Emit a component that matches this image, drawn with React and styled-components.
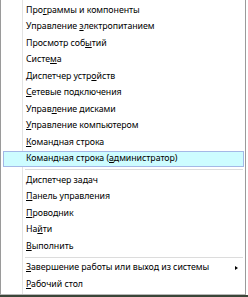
import styled, { createGlobalStyle } from "styled-components";

const GlobalStyle = createGlobalStyle`
  html, body {
    margin: 0;
    padding: 0;
    background: #ffffff;
  }
  body {
    width: 248px;
    height: 297px;
    overflow: hidden;
    font-family: "Noto Sans", "Open Sans", "DejaVu Sans", sans-serif;
  }
`;

const Screen = styled.div`
  width: 248px;
  height: 297px;
  display: flex;
  flex-direction: column;
`;

const Menu = styled.div`
  width: 246px;
  height: 295px;
  box-sizing: border-box;
  border-left: 1px solid #9a9a9a;
  border-right: 1px solid #9a9a9a;
  border-bottom: 1px solid #b8b8b8;
  padding: 2px 1px 0 2px;
  background:
    linear-gradient(
      to right,
      transparent 21px,
      #e3e3e3 21px,
      #e3e3e3 22px,
      #ffffff 22px,
      #ffffff 23px,
      transparent 23px
    ),
    #ffffff;
  display: flex;
  flex-direction: column;
`;

const Desktop = styled.div`
  flex: 1;
  background: #3a4638;
`;

const Row = styled.div`
  height: 16.5px;
  box-sizing: border-box;
  display: flex;
  align-items: center;
  justify-content: space-between;
  padding: 0 5px 0 22px;
  border: 1px solid ${(p) => (p.$active ? "#a4b8e6" : "transparent")};
  background: ${(p) => (p.$active ? "#cdfcff" : "transparent")};
  font-size: 8.8px;
  letter-spacing: -0.05px;
  line-height: 1;
  color: #000000;
  white-space: nowrap;
  cursor: default;
`;

const Key = styled.span`
  text-decoration: underline;
  text-underline-offset: 1px;
  text-decoration-thickness: 1px;
`;

const Arrow = styled.span`
  width: 0;
  height: 0;
  border-top: 2.5px solid transparent;
  border-bottom: 2.5px solid transparent;
  border-left: 3px solid #000000;
`;

const Separator = styled.div`
  height: 5px;
  display: flex;
  align-items: center;
  padding-left: 22px;
  margin-right: 1px;
  &::after {
    content: "";
    flex: 1;
    height: 1px;
    background: #dcdcdc;
  }
`;

const groups = [
  [
    { label: "Про&граммы и компоненты" },
    { label: "Управление &электропитанием" },
    { label: "Просмотр соб&ытий" },
    { label: "Систе&ма" },
    { label: "Диспетчер устр&ойств" },
    { label: "&Сетевые подключения" },
    { label: "Управ&ление дисками" },
    { label: "&Управление компьютером" },
    { label: "&Командная строка" },
    { label: "Командная строка (&администратор)", active: true },
  ],
  [
    { label: "&Диспетчер задач" },
    { label: "&Панель управления" },
    { label: "&Проводник" },
    { label: "На&йти" },
    { label: "&Выполнить" },
  ],
  [
    { label: "&Завершение работы или выход из системы", submenu: true },
    { label: "&Рабочий стол" },
  ],
];

function Label({ text }) {
  const i = text.indexOf("&");
  if (i < 0) return <span>{text}</span>;
  return (
    <span>
      {text.slice(0, i)}
      <Key>{text[i + 1]}</Key>
      {text.slice(i + 2)}
    </span>
  );
}

function MenuItem({ item }) {
  return (
    <Row $active={item.active}>
      <Label text={item.label} />
      {item.submenu && <Arrow />}
    </Row>
  );
}

export default function App() {
  return (
    <Screen>
      <GlobalStyle />
      <Menu>
        {groups.map((group, gi) => (
          <div key={gi}>
            {gi > 0 && <Separator />}
            {group.map((item) => (
              <MenuItem key={item.label} item={item} />
            ))}
          </div>
        ))}
      </Menu>
      <Desktop />
    </Screen>
  );
}
